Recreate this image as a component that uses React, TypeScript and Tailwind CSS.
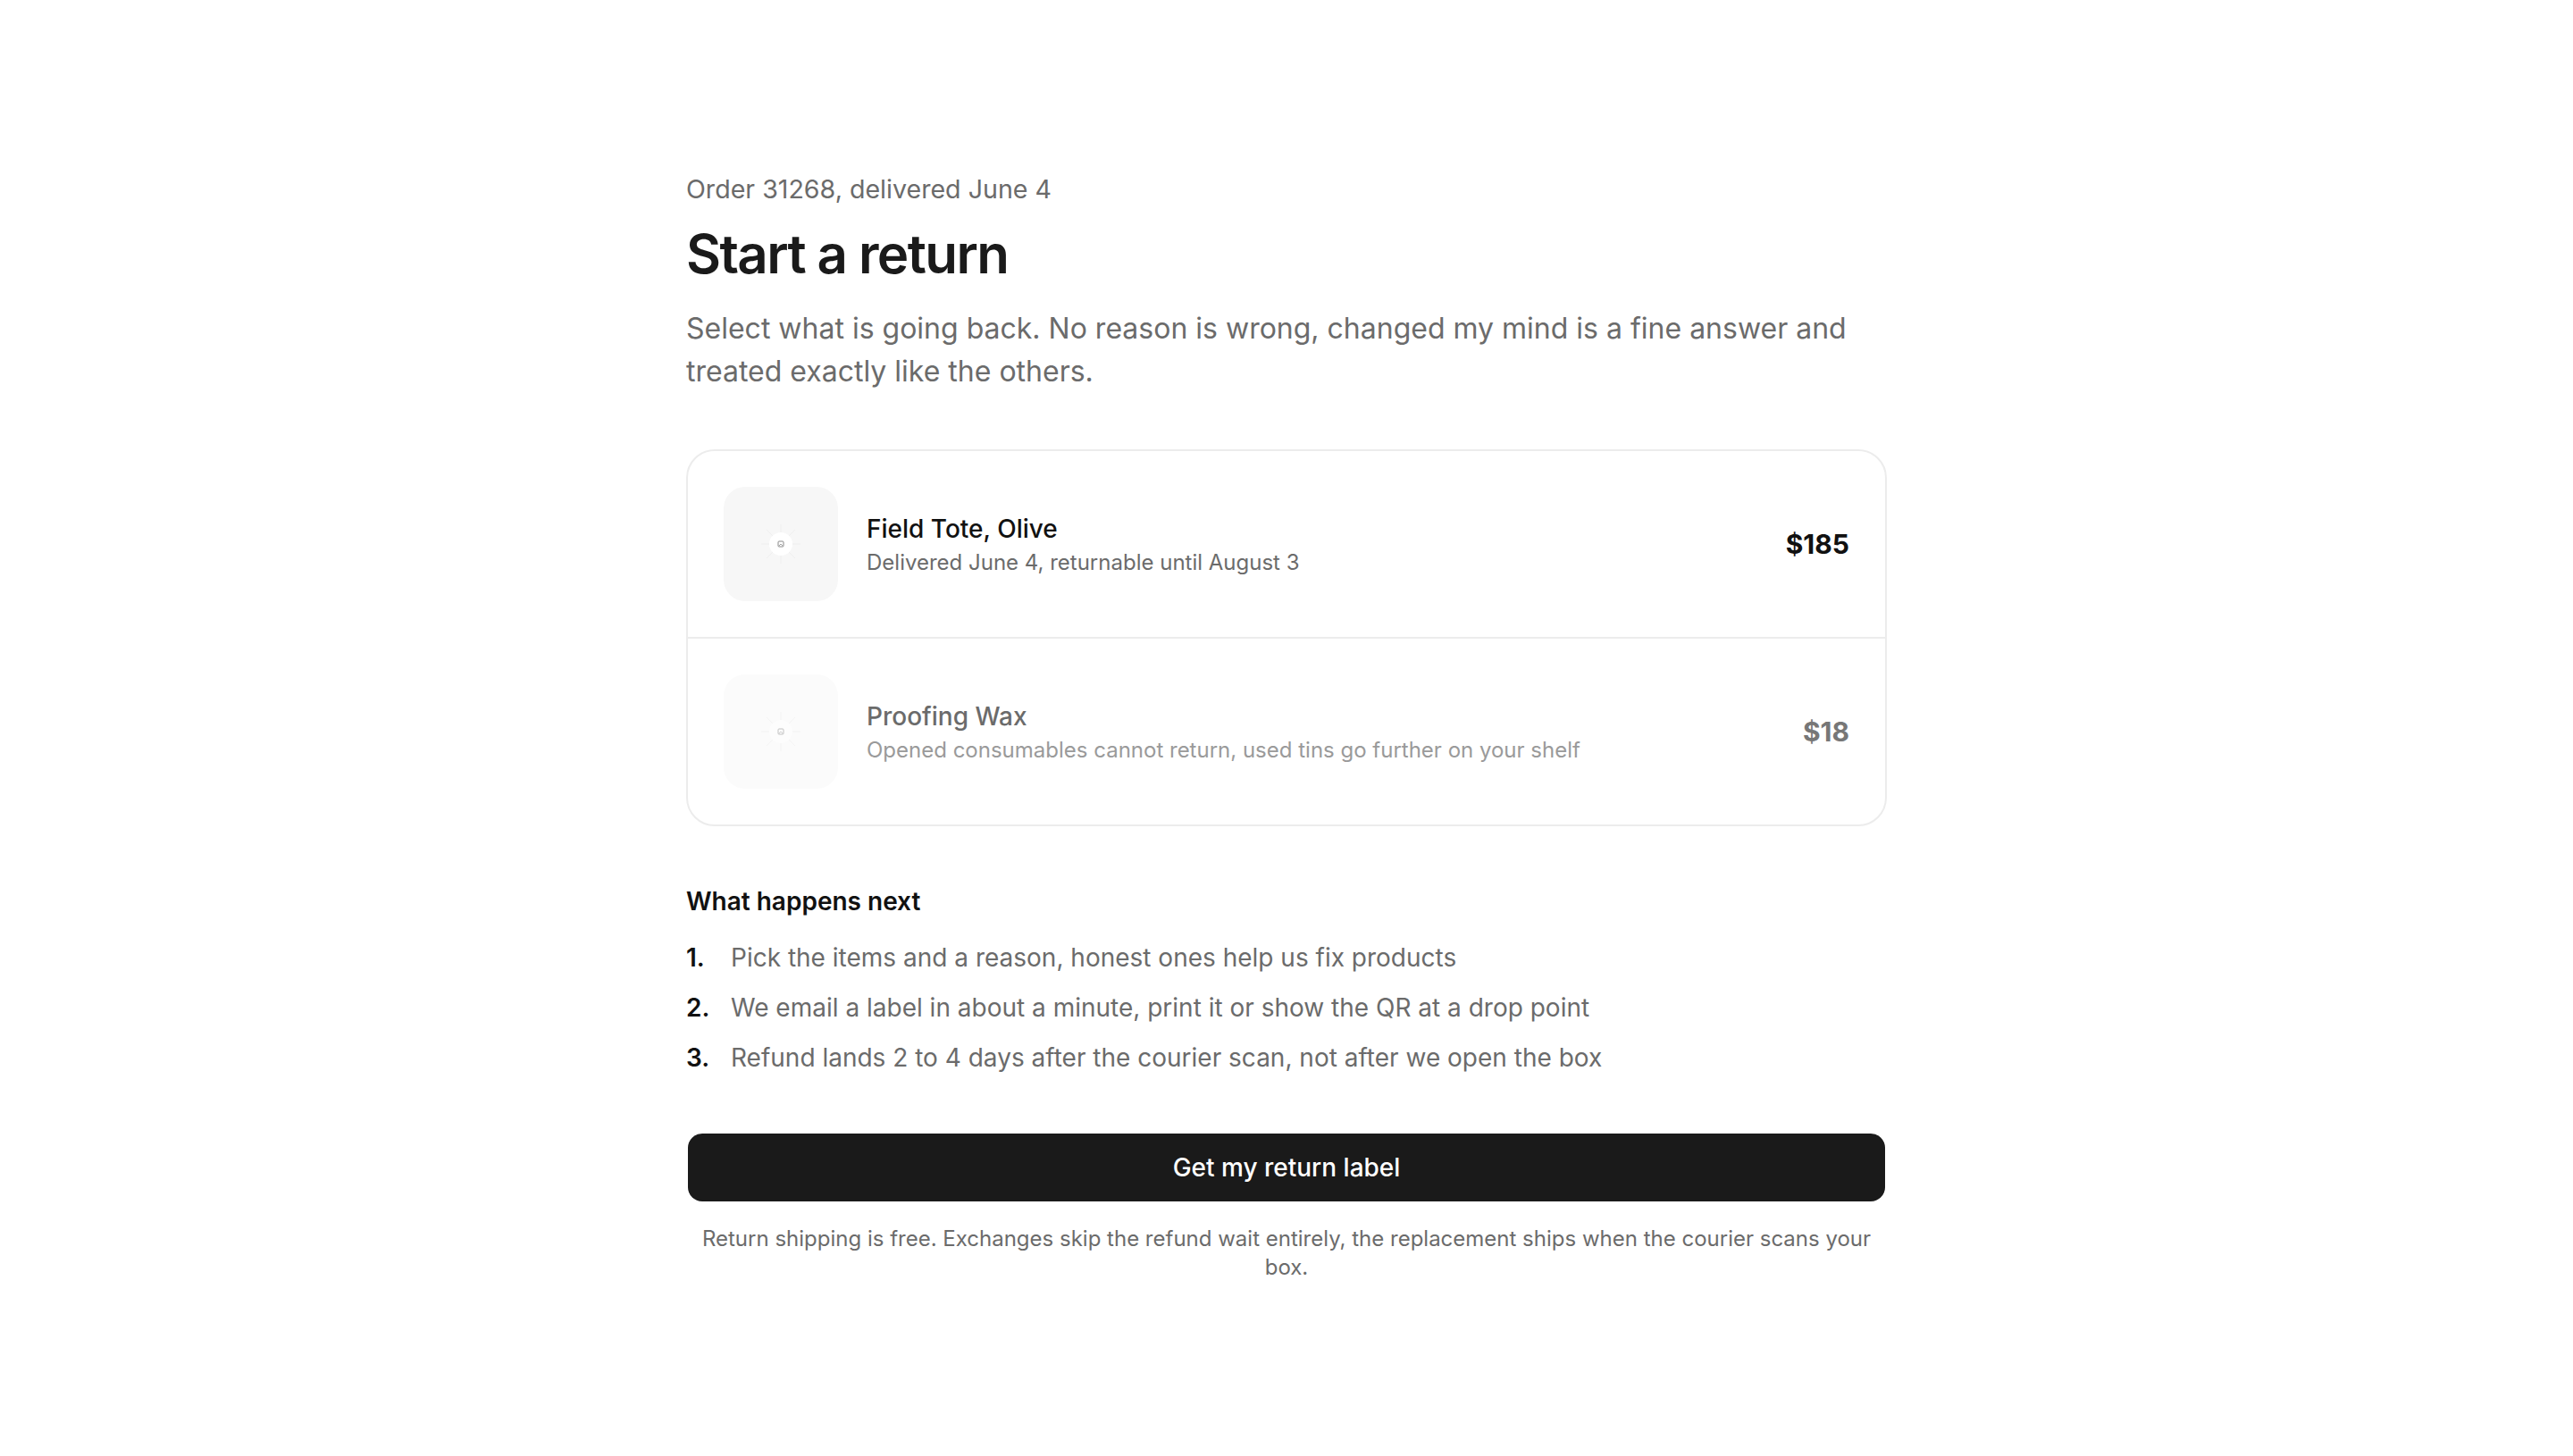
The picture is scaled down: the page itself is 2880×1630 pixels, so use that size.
import React from 'react';

const Placeholder = ({ faded }: { faded?: boolean }) => (
  <div
    className={`w-[128px] h-[128px] shrink-0 rounded-[24px] flex items-center justify-center ${
      faded ? 'bg-[#fbfbfb]' : 'bg-[#f7f7f7]'
    }`}
  >
    <svg width="44" height="44" viewBox="0 0 44 44" className={faded ? 'opacity-50' : ''}>
      <g stroke="#efefef" strokeWidth="1">
        <line x1="22" y1="0" x2="22" y2="44" />
        <line x1="0" y1="22" x2="44" y2="22" />
        <line x1="6" y1="6" x2="38" y2="38" />
        <line x1="38" y1="6" x2="6" y2="38" />
      </g>
      <circle cx="22" cy="22" r="13" fill="#ffffff" />
      <rect x="19" y="19" width="6" height="6" rx="1" fill="none" stroke="#8a8a8a" strokeWidth="1" />
      <path d="M20 24 L22 22 L24 24" fill="none" stroke="#8a8a8a" strokeWidth="0.8" />
    </svg>
  </div>
);

const items = [
  {
    name: 'Field Tote, Olive',
    note: 'Delivered June 4, returnable until August 3',
    price: '$185',
    disabled: false,
  },
  {
    name: 'Proofing Wax',
    note: 'Opened consumables cannot return, used tins go further on your shelf',
    price: '$18',
    disabled: true,
  },
];

const steps = [
  'Pick the items and a reason, honest ones help us fix products',
  'We email a label in about a minute, print it or show the QR at a drop point',
  'Refund lands 2 to 4 days after the courier scan, not after we open the box',
];

export default function App() {
  return (
    <div className="min-h-screen bg-white font-['Inter','Noto_Sans',sans-serif] text-[#1a1a1a]">
      <div className="mx-auto w-[1344px] pt-[192px] pb-[192px]">
        <p className="text-[28.6px] leading-[40px] text-[#6b6b6b]">Order 31268, delivered June 4</p>
        <h1 className="mt-[14px] text-[60px] leading-[76px] font-semibold tracking-[-1.6px] text-[#1a1a1a]">
          Start a return
        </h1>
        <p className="mt-[22px] text-[32px] leading-[48px] text-[#6b6b6b]">
          Select what is going back. No reason is wrong, changed my mind is a fine answer and treated exactly like the
          others.
        </p>

        <div className="mt-[63px] rounded-[32px] border-2 border-[#ececec] overflow-hidden">
          {items.map((item, i) => (
            <div
              key={item.name}
              className={`flex items-center gap-[32px] p-[40px] ${i > 0 ? 'border-t-2 border-[#ececec]' : ''}`}
            >
              <Placeholder faded={item.disabled} />
              <div className="flex-1 min-w-0">
                <div
                  className={`text-[28px] leading-[40px] font-medium ${
                    item.disabled ? 'text-[#6b6b6b]' : 'text-[#111111]'
                  }`}
                >
                  {item.name}
                </div>
                <div
                  className={`mt-[2px] text-[24px] leading-[32px] ${
                    item.disabled ? 'text-[#9a9a9a]' : 'text-[#6b6b6b]'
                  }`}
                >
                  {item.note}
                </div>
              </div>
              <div
                className={`text-[30px] leading-[40px] font-bold ${
                  item.disabled ? 'text-[#777777]' : 'text-[#111111]'
                }`}
              >
                {item.price}
              </div>
            </div>
          ))}
        </div>

        <h2 className="mt-[64px] text-[28px] leading-[40px] font-semibold text-[#111111]">What happens next</h2>
        <ol className="mt-[23px] flex flex-col gap-[16px]">
          {steps.map((s, i) => (
            <li key={i} className="flex text-[28px] leading-[40px]">
              <span className="w-[50px] shrink-0 font-semibold text-[#111111]">{i + 1}.</span>
              <span className="text-[#6b6b6b]">{s}</span>
            </li>
          ))}
        </ol>

        <div className="mt-[65px] px-[2px]">
          <button className="w-full h-[76px] rounded-[16px] bg-[#1a1a1a] text-white text-[28px] font-medium">
            Get my return label
          </button>
        </div>
        <p className="mt-[26px] px-[16px] text-center text-[24px] leading-[32px] text-[#6b6b6b]">
          Return shipping is free. Exchanges skip the refund wait entirely, the replacement ships when the courier scans
          your box.
        </p>
      </div>
    </div>
  );
}
